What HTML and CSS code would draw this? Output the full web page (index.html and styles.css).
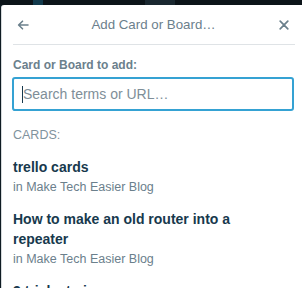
FILE: index.html
```html
<!DOCTYPE html>
<html>
<head>
<meta charset="utf-8">
<link rel="stylesheet" href="styles.css">
</head>
<body>
<div class="topbar"><span class="blue b1"></span><span class="blue b2"></span></div>
<div class="popup">
  <div class="header">
    <button class="icon-btn back" aria-label="Back">
      <svg width="12" height="10" viewBox="0 0 12 10"><path d="M11 5H1.8M5.5 1.2L1.6 5l3.9 3.8" fill="none" stroke="#6b808c" stroke-width="1.6" stroke-linecap="round" stroke-linejoin="round"/></svg>
    </button>
    <div class="title">Add Card or Board…</div>
    <button class="icon-btn close" aria-label="Close">
      <svg width="10" height="10" viewBox="0 0 10 10"><path d="M1.2 1.2l7.6 7.6M8.8 1.2L1.2 8.8" fill="none" stroke="#6b808c" stroke-width="1.7" stroke-linecap="round"/></svg>
    </button>
  </div>
  <div class="content">
    <label class="label">Card or Board to add:</label>
    <div class="input-wrap">
      <input class="search" type="text" placeholder="Search terms or URL…">
      <span class="caret"></span>
    </div>
    <div class="section">CARDS:</div>
    <div class="item">
      <div class="item-title">trello cards</div>
      <div class="item-sub">in Make Tech Easier Blog</div>
    </div>
    <div class="item">
      <div class="item-title">How to make an old router into a repeater</div>
      <div class="item-sub">in Make Tech Easier Blog</div>
    </div>
    <div class="item">
      <div class="item-title">3 tricks to improve your</div>
      <div class="item-sub">in Make Tech Easier Blog</div>
    </div>
  </div>
</div>
</body>
</html>
```
FILE: styles.css
```css
html, body {
  margin: 0;
  padding: 0;
  width: 302px;
  height: 288px;
  overflow: hidden;
  background: #0f1b23;
  font-family: "Liberation Sans", Arial, sans-serif;
}
.topbar {
  height: 5px;
  position: relative;
  background: #0c1419;
}
.blue {
  position: absolute;
  top: 0;
  height: 5px;
  background: #123a4c;
}
.b1 { left: 33px; width: 10px; }
.b2 { left: 145px; width: 30px; background: #1a2830; }
.popup {
  margin-left: 1px;
  width: 304px;
  height: 283px;
  overflow: hidden;
  background: #fff;
  border-left: 1px solid #d6dadc;
  border-radius: 3px 3px 0 0;
  box-sizing: border-box;
  padding: 0 10px;
}
.header {
  display: flex;
  align-items: center;
  justify-content: space-between;
  height: 39px;
  margin-left: 1px;
  border-bottom: 1px solid #dfe3e6;
}
.title {
  flex: 1;
  text-align: center;
  font-size: 13.3px;
  line-height: 39px;
  color: #6b808c;
}
.icon-btn {
  background: none;
  border: 0;
  padding: 0;
  width: 20px;
  height: 20px;
  display: flex;
  align-items: center;
  justify-content: center;
}
.close { margin-right: 1px; }
.content {
  padding-top: 12px;
}
.label {
  display: block;
  font-size: 12px;
  font-weight: bold;
  line-height: 16px;
  color: #6b808c;
  padding-left: 1px;
}
.input-wrap {
  position: relative;
  margin-top: 4px;
}
.search {
  display: block;
  box-sizing: border-box;
  width: 282px;
  height: 34px;
  border: 2px solid #35a2d3;
  border-radius: 3px;
  padding: 0 9px;
  font-family: "Liberation Sans", Arial, sans-serif;
  font-size: 14px;
  color: #17394d;
  outline: none;
  background: #fff;
}
.search::placeholder {
  color: #7e8e98;
}
.caret {
  position: absolute;
  left: 10px;
  top: 9px;
  width: 1px;
  height: 17px;
  background: #17394d;
}
.section {
  margin-top: 14px;
  font-size: 12.5px;
  line-height: 20px;
  color: #7f929d;
  padding-left: 1px;
}
.item {
  padding: 11px 0 0 1px;
}
.section + .item { padding-top: 12px; }
.item-title {
  font-size: 14px;
  font-weight: bold;
  line-height: 20px;
  color: #17394d;
  width: 230px;
}
.item-sub {
  font-size: 12.5px;
  line-height: 21px;
  color: #6b808c;
}
```
